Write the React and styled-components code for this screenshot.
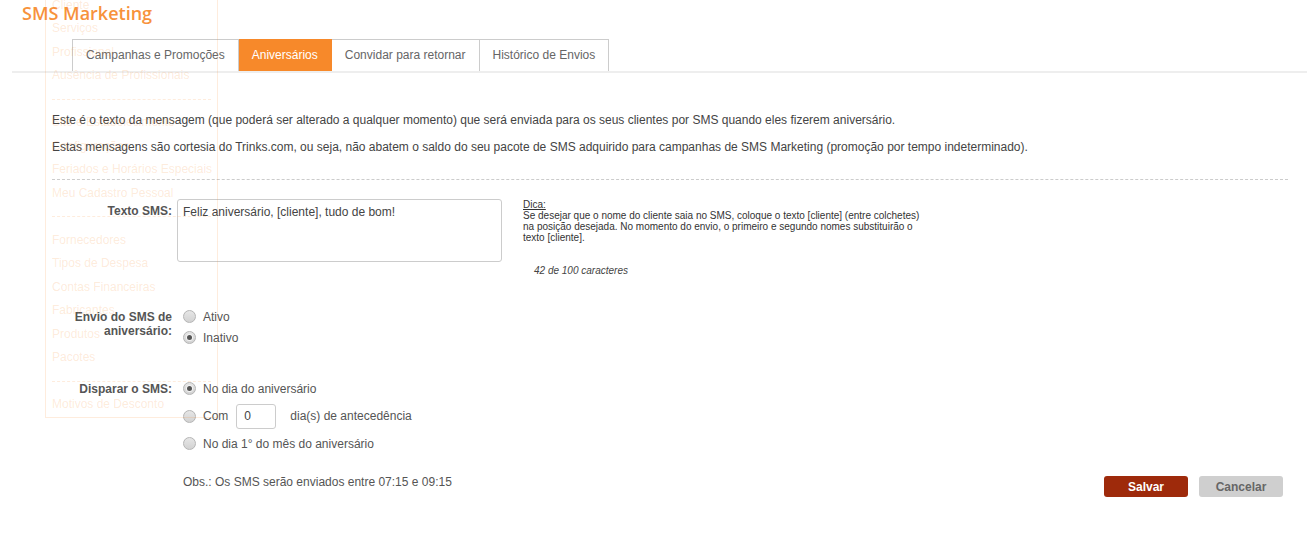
import React from 'react';
import styled, { createGlobalStyle } from 'styled-components';

const GlobalStyle = createGlobalStyle`
  body {
    margin: 0;
    background: #fff;
    font-family: 'Liberation Sans', Arial, sans-serif;
    font-size: 12px;
    color: #444;
  }
`;

const Page = styled.div`
  position: relative;
  width: 1307px;
  height: 554px;
  overflow: hidden;
`;

const Title = styled.h1`
  margin: 0;
  height: 39px;
  padding-left: 22px;
  font-family: 'Open Sans', sans-serif;
  font-size: 18px;
  font-weight: 600;
  line-height: 26px;
  color: #f7923c;
`;

const TabBar = styled.ul`
  display: flex;
  margin: 0 0 0 12px;
  padding: 0 0 0 60px;
  list-style: none;
  border-bottom: 2px solid #eee;
`;

const Tab = styled.li`
  height: 31px;
  padding: 0 13px;
  border: 1px solid ${({ $active }) => ($active ? '#f7892a' : '#ccc')};
  border-bottom: none;
  border-left-width: ${({ $first }) => ($first ? '1px' : '0')};
  background: ${({ $active }) => ($active ? '#f7892a' : '#fff')};
  color: ${({ $active }) => ($active ? '#fff' : '#666')};
  font-size: 12px;
  line-height: 30px;
  white-space: nowrap;
`;

const Content = styled.div`
  padding: 39px 19px 0 52px;
`;

const Intro = styled.p`
  margin: 0 0 11px;
  line-height: 16px;
  color: #444;
`;

const Divider = styled.hr`
  margin: 24px 0 19px;
  border: none;
  border-top: 1px dashed #ccc;
`;

const FormRow = styled.div`
  display: flex;
  align-items: flex-start;
  margin-top: ${({ $gap }) => $gap || 0}px;
`;

const Label = styled.label`
  width: 120px;
  flex-shrink: 0;
  padding-top: ${({ $pad }) => $pad || 0}px;
  margin-right: 5px;
  text-align: right;
  font-weight: bold;
  line-height: 14px;
  color: #555;
`;

const SmsText = styled.textarea`
  width: 325px;
  height: 63px;
  box-sizing: border-box;
  padding: 5px 5px;
  border: 1px solid #ccc;
  border-radius: 3px;
  resize: none;
  font-family: 'Liberation Sans', Arial, sans-serif;
  font-size: 12px;
  line-height: 14px;
  color: #444;
`;

const TipColumn = styled.div`
  margin-left: 21px;
  width: 400px;
`;

const Tip = styled.div`
  font-size: 10px;
  line-height: 11px;
  color: #333;

  u {
    display: block;
  }
`;

const Counter = styled.div`
  margin-top: 22px;
  padding-left: 11px;
  font-size: 10px;
  font-style: italic;
  line-height: 12px;
  color: #444;
`;

const Options = styled.div`
  display: flex;
  flex-direction: column;
  margin-left: 6px;
`;

const Option = styled.div`
  display: flex;
  align-items: center;
  height: ${({ $tall }) => ($tall ? 34 : 21)}px;
  color: #555;
`;

const Radio = styled.span`
  position: relative;
  width: 11px;
  height: 11px;
  margin-right: 7px;
  border: 1px solid #b5b5b5;
  border-radius: 50%;
  background: linear-gradient(#e6e6e6, #d2d2d2);

  &::after {
    content: '';
    display: ${({ $checked }) => ($checked ? 'block' : 'none')};
    position: absolute;
    left: 3px;
    top: 3px;
    width: 5px;
    height: 5px;
    border-radius: 50%;
    background: #555;
    box-shadow: 0 0 0 1px #f4f4f4;
  }
`;

const DaysInput = styled.input`
  width: 40px;
  height: 25px;
  box-sizing: border-box;
  margin: 0 14px 0 8px;
  padding: 0 7px;
  border: 1px solid #ccc;
  border-radius: 3px;
  font-family: 'Liberation Sans', Arial, sans-serif;
  font-size: 12px;
  color: #444;
`;

const Footer = styled.div`
  display: flex;
  align-items: flex-start;
  margin-top: 21px;
  padding: 0 24px 0 183px;
`;

const Note = styled.div`
  flex: 1;
  line-height: 14px;
  color: #555;
`;

const Button = styled.button`
  width: 84px;
  height: 21px;
  margin: 1px 0 0 ${({ $gap }) => $gap || 0}px;
  padding: 0;
  border: none;
  border-radius: 3px;
  background: ${({ $primary }) => ($primary ? '#9e2a0b' : '#cfcfcf')};
  color: ${({ $primary }) => ($primary ? '#fff' : '#666')};
  font-family: 'Liberation Sans', Arial, sans-serif;
  font-size: 12px;
  font-weight: bold;
`;

const SideMenu = styled.ul`
  position: absolute;
  left: 45px;
  top: -31px;
  width: 159px;
  margin: 0;
  padding: 0 6px;
  list-style: none;
  border: 1px solid rgba(247, 137, 42, 0.16);
  pointer-events: none;
`;

const MenuItem = styled.li`
  height: 23.5px;
  line-height: 23.5px;
  font-size: 12px;
  color: rgba(247, 137, 42, 0.18);
  white-space: nowrap;
`;

const MenuSep = styled.li`
  height: 23.5px;
  display: flex;
  align-items: center;

  &::before {
    content: '';
    flex: 1;
    border-top: 1px dashed rgba(247, 137, 42, 0.16);
  }
`;

const menu = [
  'Agenda',
  'Cliente',
  'Serviços',
  'Profissional',
  'Ausência de Profissionais',
  '-',
  'Site e Estabelecimento',
  'Configurações',
  'Feriados e Horários Especiais',
  'Meu Cadastro Pessoal',
  '-',
  'Fornecedores',
  'Tipos de Despesa',
  'Contas Financeiras',
  'Fabricantes',
  'Produtos',
  'Pacotes',
  '-',
  'Motivos de Desconto',
];

const tabs = ['Campanhas e Promoções', 'Aniversários', 'Convidar para retornar', 'Histórico de Envios'];

const App = () => (
  <Page>
    <GlobalStyle />
    <Title>SMS Marketing</Title>
    <TabBar>
      {tabs.map((t, i) => (
        <Tab key={t} $first={i === 0} $active={i === 1}>
          {t}
        </Tab>
      ))}
    </TabBar>

    <Content>
      <Intro>
        Este é o texto da mensagem (que poderá ser alterado a qualquer momento) que será enviada para os seus
        clientes por SMS quando eles fizerem aniversário.
      </Intro>
      <Intro>
        Estas mensagens são cortesia do Trinks.com, ou seja, não abatem o saldo do seu pacote de SMS adquirido para
        campanhas de SMS Marketing (promoção por tempo indeterminado).
      </Intro>
      <Divider />

      <FormRow>
        <Label $pad={5}>Texto SMS:</Label>
        <SmsText defaultValue="Feliz aniversário, [cliente], tudo de bom!" />
        <TipColumn>
          <Tip>
            <u>Dica:</u>
            Se desejar que o nome do cliente saia no SMS, coloque o texto [cliente] (entre colchetes)
            <br />
            na posição desejada. No momento do envio, o primeiro e segundo nomes substituirão o
            <br />
            texto [cliente].
          </Tip>
          <Counter>42 de 100 caracteres</Counter>
        </TipColumn>
      </FormRow>

      <FormRow $gap={29}>
        <Label $pad={4}>
          Envio do SMS de
          <br />
          aniversário:
        </Label>
        <Options>
          <Option>
            <Radio />
            Ativo
          </Option>
          <Option>
            <Radio $checked />
            Inativo
          </Option>
        </Options>
      </FormRow>

      <FormRow $gap={30}>
        <Label $pad={4}>Disparar o SMS:</Label>
        <Options>
          <Option>
            <Radio $checked />
            No dia do aniversário
          </Option>
          <Option $tall>
            <Radio />
            Com
            <DaysInput defaultValue="0" />
            dia(s) de antecedência
          </Option>
          <Option>
            <Radio />
            No dia 1° do mês do aniversário
          </Option>
        </Options>
      </FormRow>
    </Content>

    <Footer>
      <Note>Obs.: Os SMS serão enviados entre 07:15 e 09:15</Note>
      <Button $primary>Salvar</Button>
      <Button $gap={11}>Cancelar</Button>
    </Footer>

    <SideMenu>
      {menu.map((m, i) => (m === '-' ? <MenuSep key={i} /> : <MenuItem key={i}>{m}</MenuItem>))}
    </SideMenu>
  </Page>
);

export default App;
